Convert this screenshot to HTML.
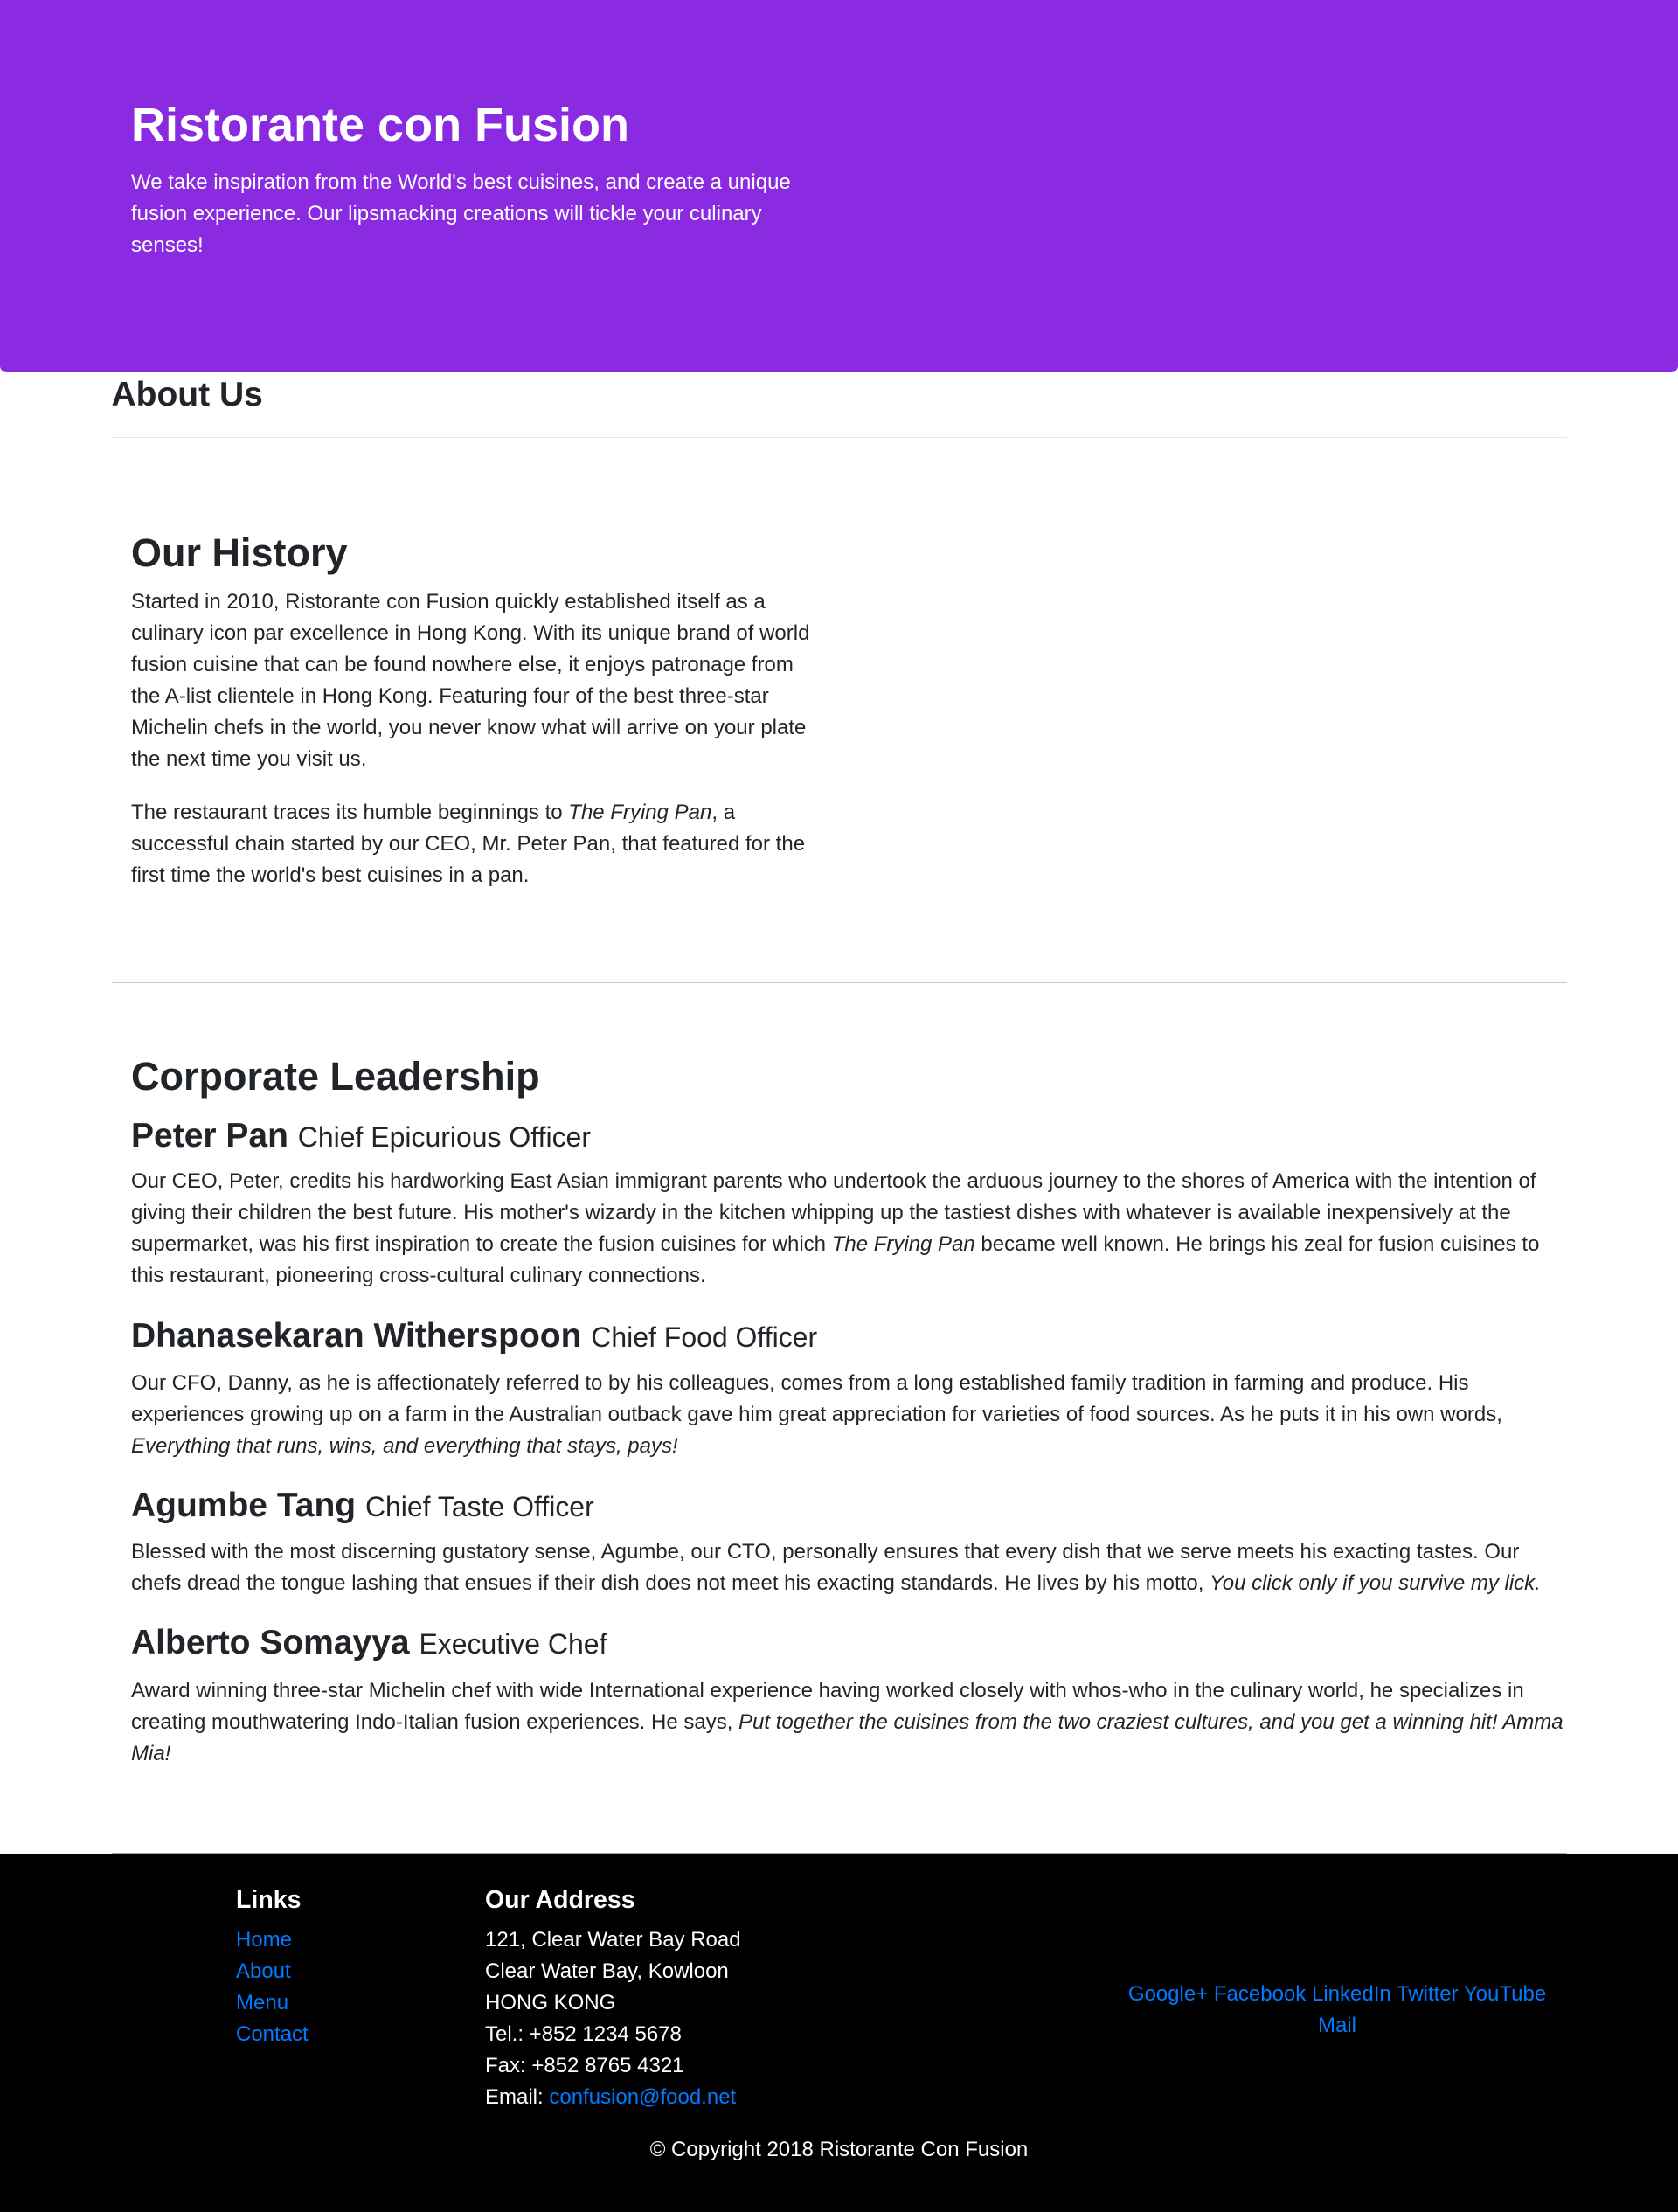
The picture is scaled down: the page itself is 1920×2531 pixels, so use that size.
<!DOCTYPE html>
<html><head><meta charset="utf-8"><style>
html,body{margin:0;padding:0;background:#fff;}
body{width:1920px;height:2530px;overflow:hidden;}
#w{zoom:1.5;width:1280px;height:1687px;position:relative;font-family:"Liberation Sans",sans-serif;font-size:16px;line-height:24px;color:#212529;}
.a{position:absolute;white-space:nowrap;margin:0;}
.h{font-weight:bold;line-height:1.2;}
a{color:#007bff;text-decoration:none;}
.jumbo{position:absolute;left:0;top:0;width:1280px;height:284px;background:#8a2be2;border-radius:0 0 5px 5px;color:#fff;}
small{font-size:82%;font-weight:400;}
</style></head><body><div id="w">
<div class="jumbo">
<div class="a h" style="left:100px;top:74px;font-size:36px;">Ristorante con Fusion</div>
<div class="a" style="left:100px;top:127px;">We take inspiration from the World's best cuisines, and create a unique<br>fusion experience. Our lipsmacking creations will tickle your culinary<br>senses!</div>
</div>
<div class="a h" style="left:85px;top:286px;font-size:26px;">About Us</div>
<div class="a" style="left:85px;top:333px;width:1110px;height:0;border-top:1px solid #e5e5e5;"></div>
<div class="a h" style="left:100px;top:404px;font-size:30px;">Our History</div>
<div class="a" style="left:100px;top:447px;">Started in 2010, Ristorante con Fusion quickly established itself as a<br>culinary icon par excellence in Hong Kong. With its unique brand of world<br>fusion cuisine that can be found nowhere else, it enjoys patronage from<br>the A-list clientele in Hong Kong. Featuring four of the best three-star<br>Michelin chefs in the world, you never know what will arrive on your plate<br>the next time you visit us.</div>
<div class="a" style="left:100px;top:608px;">The restaurant traces its humble beginnings to <i>The Frying Pan</i>, a<br>successful chain started by our CEO, Mr. Peter Pan, that featured for the<br>first time the world's best cuisines in a pan.</div>
<div class="a" style="left:85px;top:749px;width:1110px;height:0;border-top:1px solid #c8c8c8;"></div>
<div class="a h" style="left:100px;top:803px;font-size:30px;">Corporate Leadership</div>
<div class="a h" style="left:100px;top:851px;font-size:26px;">Peter Pan <small>Chief Epicurious Officer</small></div>
<div class="a" style="left:100px;top:889px;">Our CEO, Peter, credits his hardworking East Asian immigrant parents who undertook the arduous journey to the shores of America with the intention of<br>giving their children the best future. His mother's wizardy in the kitchen whipping up the tastiest dishes with whatever is available inexpensively at the<br>supermarket, was his first inspiration to create the fusion cuisines for which <i>The Frying Pan</i> became well known. He brings his zeal for fusion cuisines to<br>this restaurant, pioneering cross-cultural culinary connections.</div>
<div class="a h" style="left:100px;top:1004px;font-size:26px;">Dhanasekaran Witherspoon <small>Chief Food Officer</small></div>
<div class="a" style="left:100px;top:1043px;">Our CFO, Danny, as he is affectionately referred to by his colleagues, comes from a long established family tradition in farming and produce. His<br>experiences growing up on a farm in the Australian outback gave him great appreciation for varieties of food sources. As he puts it in his own words,<br><i>Everything that runs, wins, and everything that stays, pays!</i></div>
<div class="a h" style="left:100px;top:1133px;font-size:26px;">Agumbe Tang <small>Chief Taste Officer</small></div>
<div class="a" style="left:100px;top:1172px;">Blessed with the most discerning gustatory sense, Agumbe, our CTO, personally ensures that every dish that we serve meets his exacting tastes. Our<br>chefs dread the tongue lashing that ensues if their dish does not meet his exacting standards. He lives by his motto, <i>You click only if you survive my lick.</i></div>
<div class="a h" style="left:100px;top:1238px;font-size:26px;">Alberto Somayya <small>Executive Chef</small></div>
<div class="a" style="left:100px;top:1278px;">Award winning three-star Michelin chef with wide International experience having worked closely with whos-who in the culinary world, he specializes in<br>creating mouthwatering Indo-Italian fusion experiences. He says, <i>Put together the cuisines from the two craziest cultures, and you get a winning hit! Amma<br>Mia!</i></div>
<div style="position:absolute;left:0;top:1414px;width:1280px;height:273px;background:#000;color:#fff;">
<div class="a" style="left:85px;top:-1px;width:1110px;height:0;border-top:1px solid #aaa;"></div>
<div class="a h" style="left:180px;top:24px;font-size:19px;">Links</div>
<div class="a" style="left:180px;top:54px;"><a>Home</a><br><a>About</a><br><a>Menu</a><br><a>Contact</a></div>
<div class="a h" style="left:370px;top:24px;font-size:19px;">Our Address</div>
<div class="a" style="left:370px;top:54px;">121, Clear Water Bay Road<br>Clear Water Bay, Kowloon<br>HONG KONG<br>Tel.: +852 1234 5678<br>Fax: +852 8765 4321<br>Email: <a>confusion@food.net</a></div>
<div class="a" style="left:840px;width:360px;top:95px;text-align:center;"><a>Google+</a> <a>Facebook</a> <a>LinkedIn</a> <a>Twitter</a> <a>YouTube</a><br><a>Mail</a></div>
<div class="a" style="left:0;width:1280px;top:214px;text-align:center;">© Copyright 2018 Ristorante Con Fusion</div>
</div>
</div></body></html>
